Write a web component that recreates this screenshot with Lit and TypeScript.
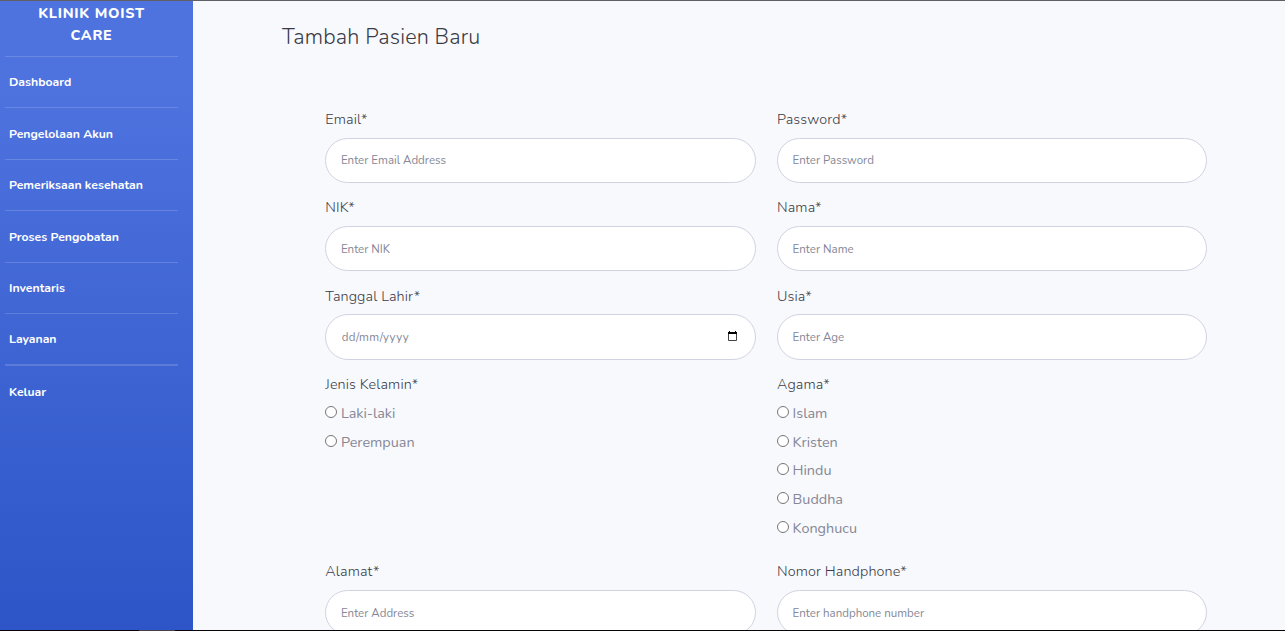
import { LitElement, html, css, nothing } from "lit";
import { customElement } from "lit/decorators.js";

interface Field {
  label: string;
  hint?: string;
  date?: boolean;
  options?: string[];
}

const MENU = [
  "Dashboard",
  "Pengelolaan Akun",
  "Pemeriksaan kesehatan",
  "Proses Pengobatan",
  "Inventaris",
  "Layanan",
  "Keluar",
];

const ROWS: Field[][] = [
  [
    { label: "Email*", hint: "Enter Email Address" },
    { label: "Password*", hint: "Enter Password" },
  ],
  [
    { label: "NIK*", hint: "Enter NIK" },
    { label: "Nama*", hint: "Enter Name" },
  ],
  [
    { label: "Tanggal Lahir*", hint: "dd/mm/yyyy", date: true },
    { label: "Usia*", hint: "Enter Age" },
  ],
  [
    { label: "Jenis Kelamin*", options: ["Laki-laki", "Perempuan"] },
    { label: "Agama*", options: ["Islam", "Kristen", "Hindu", "Buddha", "Konghucu"] },
  ],
  [
    { label: "Alamat*", hint: "Enter Address" },
    { label: "Nomor Handphone*", hint: "Enter handphone number" },
  ],
];

@customElement("app-root")
export class AppRoot extends LitElement {
  static styles = css`
    :host {
      display: flex;
      flex-direction: column;
      box-sizing: border-box;
      width: 100%;
      height: 631px;
      overflow: hidden;
      border-top: 1px solid #606066;
      background: #f8f9fc;
      font-family: Nunito, Lato, "Open Sans", sans-serif;
      color: #3a3b45;
    }
    .body {
      display: flex;
      height: 629px;
      overflow: hidden;
    }
    .sidebar {
      box-sizing: border-box;
      flex: none;
      width: 193px;
      height: 835px;
      padding: 2px 15px 0 5px;
      background: linear-gradient(180deg, #4e73df 10%, #224abe 100%);
      color: #fff;
    }
    .brand {
      display: flex;
      flex-direction: column;
      align-items: center;
      height: 52.8px;
      font-size: 14.4px;
      font-weight: 800;
      line-height: 21.6px;
      letter-spacing: 0.72px;
    }
    .item {
      box-sizing: border-box;
      display: flex;
      align-items: center;
      height: 51.44px;
      padding: 0.4px 0 0 4px;
      border-top: 1px solid rgba(255, 255, 255, 0.16);
      font-size: 12.24px;
      font-weight: 700;
      white-space: nowrap;
    }
    .item:last-child {
      padding-top: 1.4px;
      border-top-width: 2px;
    }
    .main {
      flex: 1;
      padding: 22px 78px 0 89px;
    }
    .title {
      margin: 0;
      height: 85.1px;
      font-size: 21.6px;
      font-weight: 330;
      line-height: 28px;
      letter-spacing: 0.17px;
      white-space: nowrap;
    }
    .form {
      display: flex;
      flex-direction: column;
      gap: 13.25px;
      padding-left: 43.3px;
    }
    .row {
      display: grid;
      grid-template-columns: 430.5px 430px;
      column-gap: 21.2px;
    }
    .label {
      display: block;
      padding-top: 1px;
      font-size: 14.4px;
      line-height: 21.6px;
      font-weight: 360;
      letter-spacing: 0.12px;
      white-space: nowrap;
    }
    .box {
      box-sizing: border-box;
      display: flex;
      align-items: center;
      height: 45.4px;
      margin-top: 7px;
      padding: 0 18px 0 14.6px;
      border: 1px solid #d1d3e2;
      border-radius: 23px;
      background: #fff;
    }
    .box.date {
      padding-left: 15.4px;
    }
    .date .input {
      letter-spacing: 0.45px;
    }
    .icon {
      margin-bottom: 2px;
    }
    .input {
      flex: 1;
      min-width: 0;
      padding: 0;
      border: 0;
      outline: 0;
      background: none;
      font: 400 11.52px Nunito, Lato, "Open Sans", sans-serif;
    }
    .input::placeholder {
      color: #858796;
      opacity: 1;
    }
    .options {
      display: flex;
      flex-direction: column;
      padding: 3px 0 5px;
    }
    .option {
      display: flex;
      align-items: center;
      gap: 3.6px;
      height: 28.75px;
      color: #858796;
      font-size: 14.4px;
      white-space: nowrap;
    }
    .radio {
      box-sizing: border-box;
      width: 12px;
      height: 12px;
      margin-bottom: 2px;
      border: 1px solid #767676;
      border-radius: 50%;
      background: #fff;
    }
    .edge {
      flex: none;
      display: flex;
      height: 1px;
      padding-left: 139px;
      background: #08040a;
    }
    .grip {
      width: 36px;
      background: #46424a;
    }
  `;

  private field(f: Field) {
    return html`<div>
      <span class="label">${f.label}</span>
      ${f.hint
        ? html`<div class="box ${f.date ? "date" : ""}">
            <input class="input" placeholder=${f.hint} />
            ${f.date
              ? html`<svg class="icon" width="9" height="10" viewBox="0 0 9 10">
                  <path d="M.5 1.5h8v8h-8z" fill="none" stroke="#444" />
                  <path d="M0 1h9v2H0zM1 0h1v1H1zM7 0h1v1H7z" fill="#000" />
                </svg>`
              : nothing}
          </div>`
        : nothing}
      ${f.options
        ? html`<div class="options">
            ${f.options.map(
              (t) => html`<label class="option">
                <span class="radio"></span>
                <span>${t}</span>
              </label>`
            )}
          </div>`
        : nothing}
    </div>`;
  }

  render() {
    return html`
      <div class="body">
        <nav class="sidebar">
          <div class="brand">
            <span>KLINIK MOIST</span>
            <span>CARE</span>
          </div>
          ${MENU.map((t) => html`<div class="item">${t}</div>`)}
        </nav>
        <main class="main">
          <h1 class="title">Tambah Pasien Baru</h1>
          <div class="form">
            ${ROWS.map((r) => html`<div class="row">${r.map((f) => this.field(f))}</div>`)}
          </div>
        </main>
      </div>
      <div class="edge"><div class="grip"></div></div>
    `;
  }
}
